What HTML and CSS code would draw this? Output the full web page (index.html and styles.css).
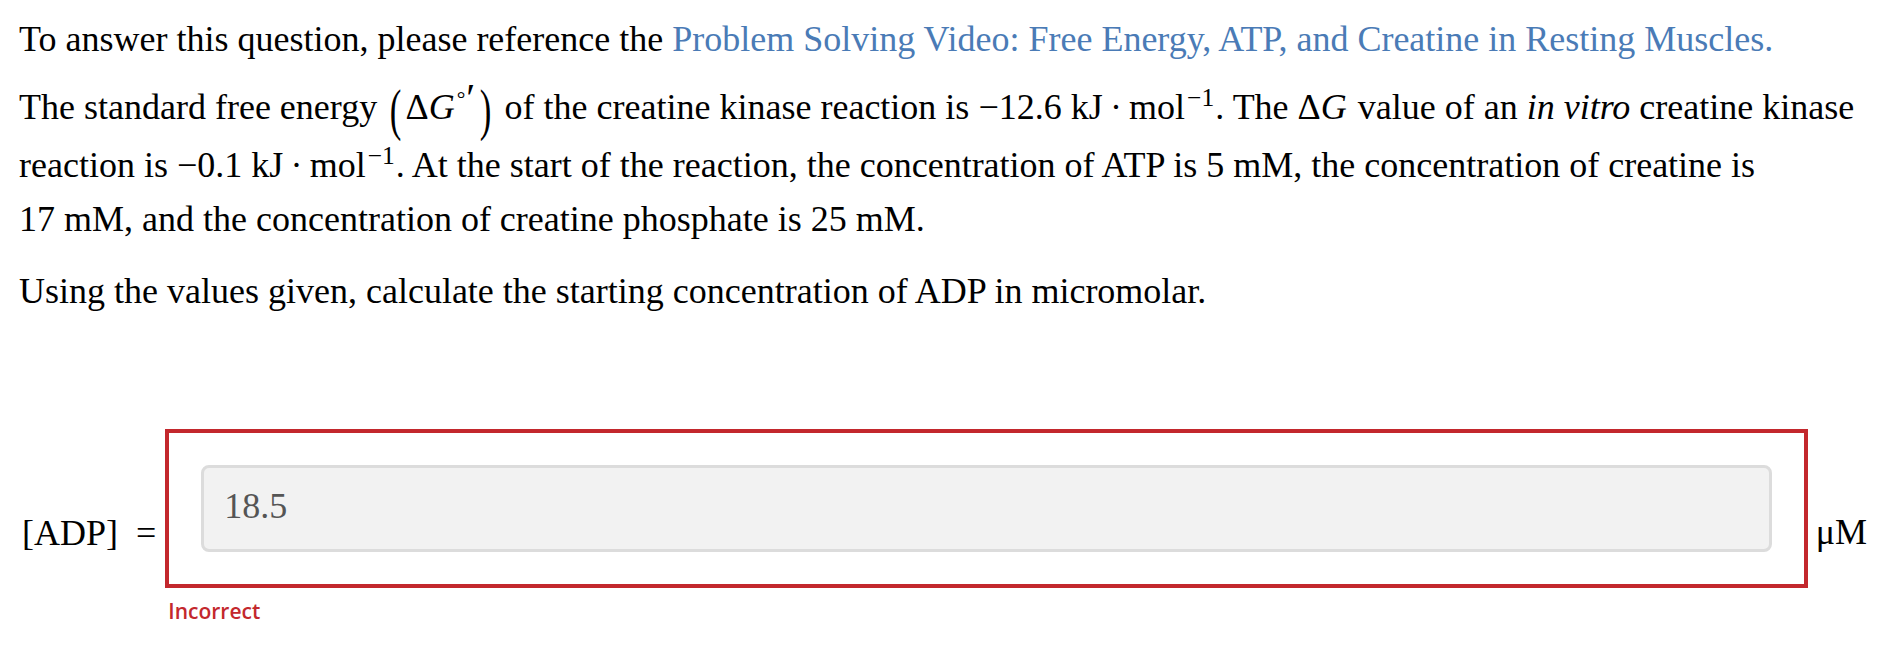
FILE: index.html
```html
<!DOCTYPE html>
<html lang="en">
<head>
<meta charset="utf-8">
<title>Creatine kinase question</title>
<link rel="stylesheet" href="styles.css">
</head>
<body>
<div class="page">
  <p class="para para-intro">To answer this question, please reference the <a class="link" href="#">Problem Solving Video: Free Energy, ATP, and Creatine in Resting Muscles.</a></p>
  <p class="para para-main">The standard free energy <span class="math"><span class="paren">(</span>Δ<i class="mi">G</i><sup class="sup-deg">°<span class="prime">′</span></sup><span class="paren">)</span></span> of the creatine kinase reaction is <span class="nw">−12.6 kJ<span class="dot">·</span>mol<sup class="sup">−1</sup></span>. The Δ<i class="mi mi-gap">G</i> value of an <i>in vitro</i> creatine kinase reaction is <span class="nw">−0.1 kJ<span class="dot">·</span>mol<sup class="sup">−1</sup></span>. At the start of the reaction, the concentration of ATP is 5 mM, the concentration of creatine is <span class="nw">17 mM,</span> and the concentration of creatine phosphate is 25 mM.</p>
  <p class="para para-ask">Using the values given, calculate the starting concentration of ADP in micromolar.</p>

  <div class="answer">
    <span class="answer-label">[ADP] =</span>
    <div class="answer-box">
      <div class="answer-input">18.5</div>
    </div>
    <span class="answer-unit">μM</span>
    <div class="feedback">Incorrect</div>
  </div>
</div>
</body>
</html>
```

FILE: styles.css
```css
html, body {
  margin: 0;
  padding: 0;
  background: #ffffff;
}

body {
  font-family: "Liberation Serif", "Times New Roman", serif;
  font-size: 36px;
  line-height: 54px;
  color: #000000;
}

.page {
  padding: 12px 20px 0 19px;
}

.para {
  margin: 0;
}

.para-intro {
  margin-bottom: 14px;
}

.para-main {
  margin-bottom: 18px;
  margin-right: 8px;
}

.link {
  color: #4a7bb6;
  text-decoration: none;
}

.nw {
  white-space: nowrap;
}

.mi {
  font-style: italic;
}

.mi-gap {
  margin-right: 2px;
}

.paren {
  display: inline-block;
  font-size: 58px;
  line-height: 56px;
  vertical-align: -10px;
  transform: scaleX(0.6);
  margin: 0;
}

.sup-deg {
  font-size: 0.6em;
  line-height: 0;
  vertical-align: 0.62em;
  margin-left: 2px;
  margin-right: 1px;
}

.prime {
  font-size: 1.9em;
  vertical-align: -0.12em;
  margin-left: 1px;
}

.sup {
  font-size: 0.71em;
  line-height: 0;
  vertical-align: 0.5em;
  margin-left: 2px;
  margin-right: 1px;
}

.dot {
  margin: 0 0.2em;
}

.answer {
  display: grid;
  grid-template-columns: auto 1fr auto;
  column-gap: 8px;
  align-items: end;
  margin-top: 111px;
  margin-right: 7px;
}

.answer-label {
  margin-left: 3px;
  margin-right: 1px;
  padding-bottom: 28px;
  word-spacing: 9px;
}

.answer-unit {
  padding-bottom: 29px;
}

.answer-box {
  border: 4px solid #c3282d;
  padding: 32px;
}

.answer-input {
  background: #f2f2f2;
  border: 3px solid #dcdcdc;
  border-radius: 8px;
  padding: 18px 20px 23px 20px;
  font-size: 36px;
  line-height: 40px;
  color: #555555;
}

.feedback {
  grid-column: 2;
  margin-top: 11px;
  padding-left: 3px;
  font-family: "Open Sans", "Liberation Sans", sans-serif;
  font-weight: 600;
  font-size: 21px;
  line-height: 25px;
  color: #c3282d;
}
```
